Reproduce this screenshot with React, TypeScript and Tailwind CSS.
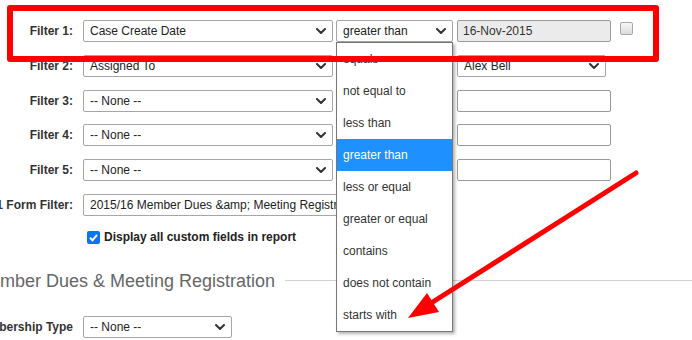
import React from "react";

const Chevron = () => (
  <svg width="10" height="6" viewBox="0 0 10 6" className="shrink-0">
    <polyline points="1,1 5,5 9,1" fill="none" stroke="#333" strokeWidth="2" strokeLinecap="round" strokeLinejoin="round" />
  </svg>
);

function Select({ text, w }: { text: string; w: string }) {
  return (
    <div className={`${w} h-[22px] shrink-0 border border-[#a6a6a6] rounded-[2px] bg-white flex items-center justify-between pl-[6px] pr-[6px] text-[#222] whitespace-nowrap overflow-hidden`}>
      <span className="overflow-hidden">{text}</span>
      <Chevron />
    </div>
  );
}

function Input({ text, gray }: { text?: string; gray?: boolean }) {
  return (
    <div className={`w-[154px] h-[22px] shrink-0 border border-[#9a9a9a] rounded-[2px] flex items-center pl-[5px] text-[#333] ${gray ? "bg-[#ebebeb]" : "bg-white"}`}>
      {text}
    </div>
  );
}

function Label({ text }: { text: string }) {
  return (
    <div className="w-[73px] shrink-0 flex justify-end">
      <span className="shrink-0 whitespace-nowrap font-bold text-[#333]">{text}</span>
    </div>
  );
}

const ops = [
  "equals",
  "not equal to",
  "less than",
  "greater than",
  "less or equal",
  "greater or equal",
  "contains",
  "does not contain",
  "starts with",
];

export default function App() {
  return (
    <div
      className="relative w-[692px] h-[340px] overflow-hidden bg-white text-[12px] leading-[14px]"
      style={{ fontFamily: '"Liberation Sans", Arial, sans-serif' }}
    >
      <div className="flex flex-col pt-[20px]">
        {/* Filter 1 */}
        <div className="flex items-center h-[22px]">
          <Label text="Filter 1:" />
          <div className="ml-[10px]"><Select text="Case Create Date" w="w-[250px]" /></div>
          <div className="ml-[3px]"><Select text="greater than" w="w-[117px]" /></div>
          <div className="ml-[4px]"><Input text="16-Nov-2015" gray /></div>
          <div className="ml-[9px] self-start mt-[2px] w-[13px] h-[13px] rounded-[2px] border border-[#a8a8a8] bg-gradient-to-b from-[#f7f7f7] to-[#dcdcdc]" />
        </div>
        {/* Filter 2 */}
        <div className="flex items-center h-[22px] mt-[12.8px]">
          <Label text="Filter 2:" />
          <div className="ml-[10px]"><Select text="Assigned To" w="w-[250px]" /></div>
          <div className="ml-[3px]"><Select text="" w="w-[117px]" /></div>
          <div className="ml-[4px]"><Select text="Alex Bell" w="w-[149px]" /></div>
        </div>
        {["Filter 3:", "Filter 4:", "Filter 5:"].map((l) => (
          <div key={l} className="flex items-center h-[22px] mt-[12.8px]">
            <Label text={l} />
            <div className="ml-[10px]"><Select text="-- None --" w="w-[250px]" /></div>
            <div className="ml-[3px]"><Select text="" w="w-[117px]" /></div>
            <div className="ml-[4px]"><Input /></div>
          </div>
        ))}
        {/* Form filter */}
        <div className="flex items-center h-[22px] mt-[12.8px]">
          <Label text="1 Form Filter:" />
          <div className="ml-[10px]"><Select text={"2015/16 Member Dues &amp; Meeting Registration"} w="w-[330px]" /></div>
        </div>
        {/* checkbox */}
        <div className="flex items-center mt-[15px] pl-[87px] h-[13px]">
          <div className="w-[13px] h-[13px] rounded-[2px] bg-[#0b74f0] flex items-center justify-center shrink-0">
            <svg width="11" height="11" viewBox="0 0 11 11">
              <polyline points="2,5.8 4.5,8.3 9,2.8" fill="none" stroke="white" strokeWidth="2" />
            </svg>
          </div>
          <span className="ml-[4px] font-bold text-[12px] text-[#222] whitespace-nowrap">Display all custom fields in report</span>
        </div>
        {/* Heading */}
        <div className="flex items-center mt-[25px] h-[24px]">
          <span className="ml-[-25px] shrink-0 whitespace-nowrap text-[18px] leading-[24px] text-[#666]">Member Dues &amp; Meeting Registration</span>
          <div className="ml-[10px] flex-1 h-px bg-[#d0d0d0]" />
        </div>
        {/* Membership */}
        <div className="flex items-center h-[21px] mt-[24px]">
          <Label text="Membership Type" />
          <div className="ml-[10px]"><Select text="-- None --" w="w-[149px]" /></div>
        </div>
      </div>

      {/* dropdown list */}
      <div className="absolute left-[336px] top-[42px] w-[117px] border border-[#767676] bg-white shadow-[2px_2px_3px_rgba(0,0,0,0.3)]">
        {ops.map((o) => (
          <div
            key={o}
            className={`h-[32px] flex items-center pl-[6px] whitespace-nowrap ${o === "greater than" ? "bg-[#1e90ff] text-white" : "text-[#333]"}`}
          >
            {o}
          </div>
        ))}
      </div>

      {/* red highlight rectangle */}
      <div className="absolute left-[7px] top-[5px] w-[652px] h-[57px] border-[6px] border-[#ff0000] rounded-[3px]" />

      {/* red arrow */}
      <svg className="absolute left-0 top-0" width="692" height="340" viewBox="0 0 692 340">
        <line x1="636" y1="173" x2="428" y2="305" stroke="#ff0000" strokeWidth="5" strokeLinecap="round" />
        <polygon points="408,318 427,293 439,312" fill="#ff0000" />
      </svg>
    </div>
  );
}
